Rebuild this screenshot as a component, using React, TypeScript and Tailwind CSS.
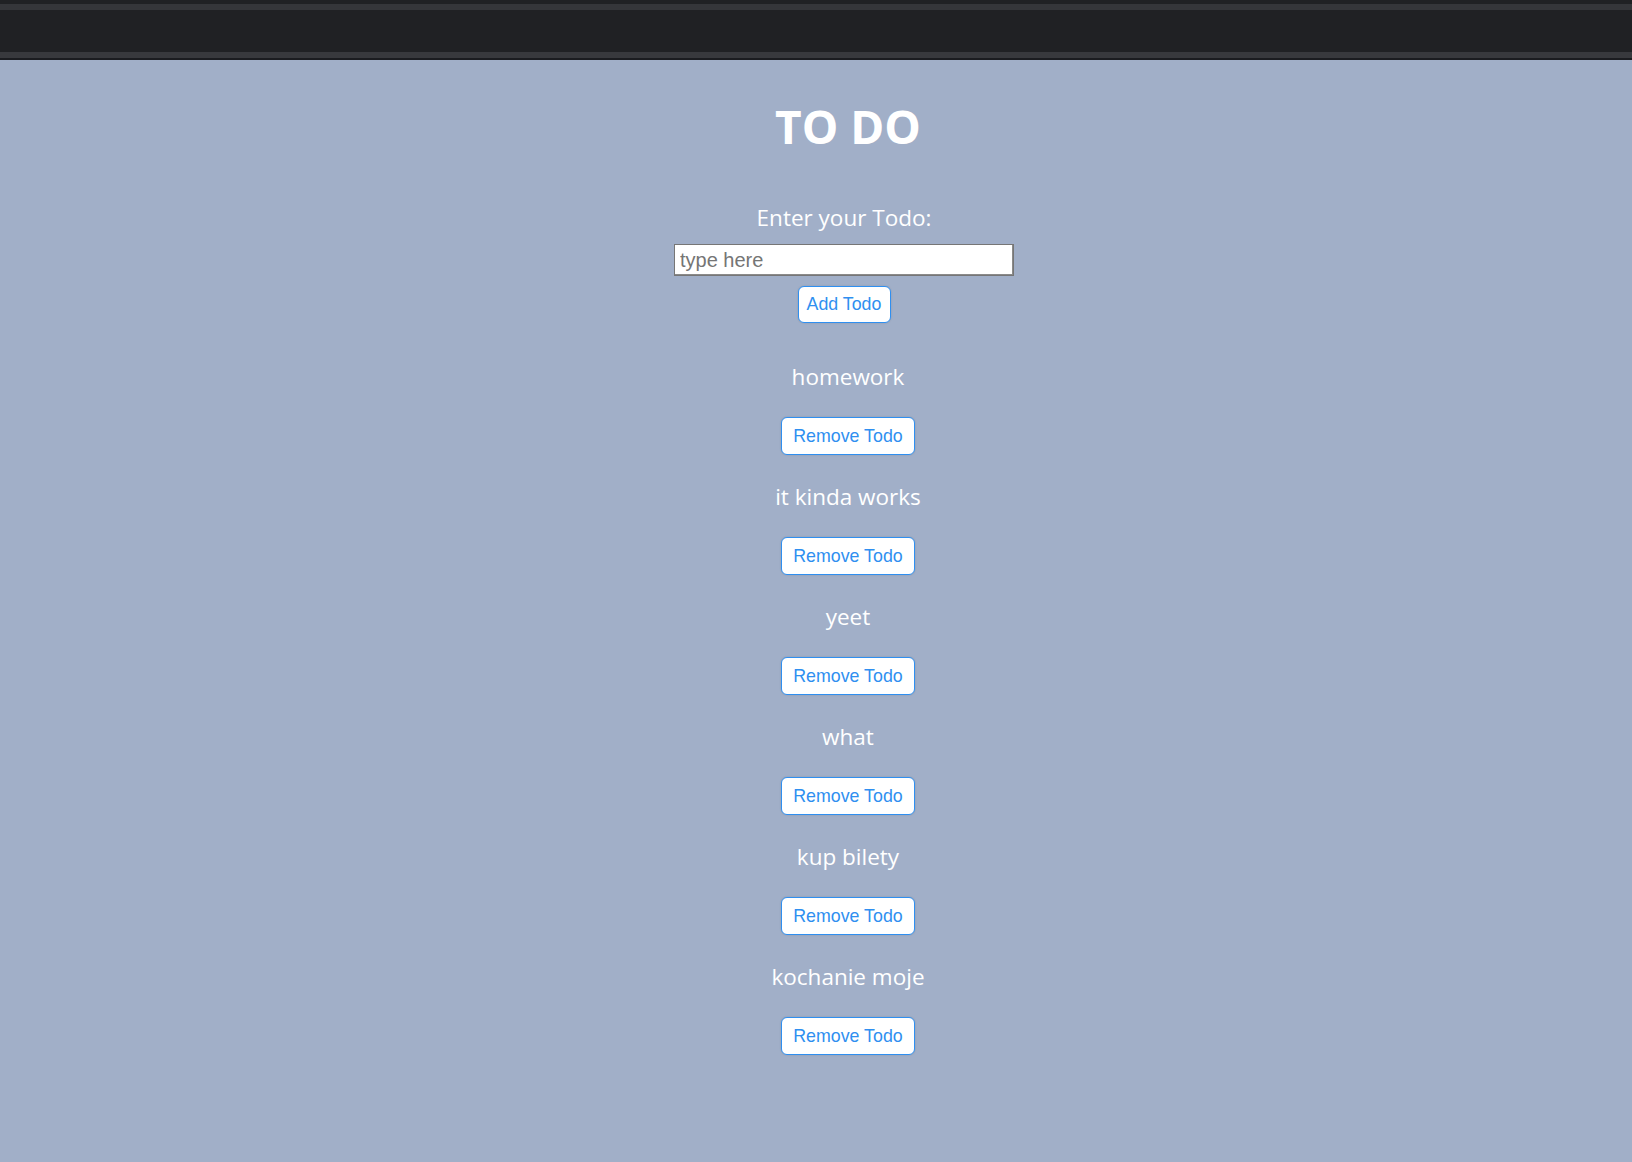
import { useState } from "react";

const initialTodos = [
  "homework",
  "it kinda works",
  "yeet",
  "what",
  "kup bilety",
  "kochanie moje",
];

const TodoItem = ({ text, onRemove }: { text: string; onRemove: () => void }) => {
  return (
    <div className="flex flex-col items-center">
      <p className="h-[32px] text-[22.5px] leading-[32px] text-white">{text}</p>
      <button
        onClick={onRemove}
        className="mt-[24px] mb-[26px] h-[38px] w-[134px] rounded-[6px] border border-[#2f8ff0] bg-white text-[17.8px] text-[#2f8ff0] shadow-[0_0_2px_rgba(0,0,0,0.15)]"
        style={{ fontFamily: '"Liberation Sans", Arial, sans-serif' }}
      >
        Remove Todo
      </button>
    </div>
  );
};

export default function App() {
  const [todos, setTodos] = useState<string[]>(initialTodos);
  const [value, setValue] = useState("");

  const addTodo = () => {
    if (!value.trim()) return;
    setTodos([...todos, value]);
    setValue("");
  };

  return (
    <div
      className="min-h-screen bg-[#a1afc8]"
      style={{ fontFamily: '"Open Sans", "Noto Sans", sans-serif' }}
    >
      {/* browser-ish top strip */}
      <div className="flex h-[60px] flex-col bg-[#202124]">
        <div className="h-[4px]" />
        <div className="h-[6px] bg-[#35363a]" />
        <div className="h-[42px]" />
        <div className="h-[6px] bg-[#38393d]" />
        <div className="h-[2px] bg-[#1b1c20]" />
      </div>

      <div className="flex flex-col items-center pl-[64px] pb-[80px]">
        <h1 className="mt-[38px] h-[56px] text-[46px] font-bold leading-[56px] text-white">
          TO DO
        </h1>

        <div className="mt-[48px] flex flex-col items-center pr-[8px]">
          <label className="h-[32px] text-[22.5px] leading-[32px] text-white">
            Enter your Todo:
          </label>
          <input
            value={value}
            onChange={(e) => setValue(e.target.value)}
            placeholder="type here"
            className="mt-[10px] h-[32px] w-[340px] border border-[#767676] bg-white px-[5px] text-[20px] text-black outline-none placeholder:text-[#757575] shadow-[inset_-1px_-1px_0_#8a8a8a]"
            style={{ fontFamily: '"Liberation Sans", Arial, sans-serif' }}
          />
          <button
            onClick={addTodo}
            className="mt-[10px] h-[37px] w-[93px] rounded-[6px] border border-[#2f8ff0] bg-white text-[17.8px] text-[#2f8ff0] shadow-[0_0_2px_rgba(0,0,0,0.15)]"
            style={{ fontFamily: '"Liberation Sans", Arial, sans-serif' }}
          >
            Add Todo
          </button>
        </div>

        <div className="mt-[38px] flex flex-col items-center">
          {todos.map((t, i) => (
            <TodoItem
              key={i}
              text={t}
              onRemove={() => setTodos(todos.filter((_, j) => j !== i))}
            />
          ))}
        </div>
      </div>
    </div>
  );
}
